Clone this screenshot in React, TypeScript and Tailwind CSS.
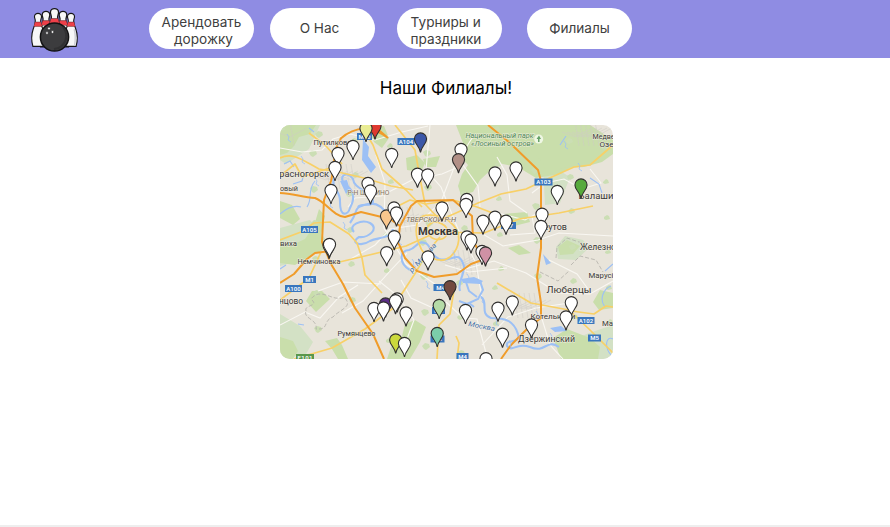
import React from "react";

type Pin = [number, number, string?];

const pins: Pin[] = [
  [375, 126, "#df3a30"], [366, 128.5, "#e9ec93"], [353, 146.5], [338, 153.5], [335, 167.5], [331, 190.5],
  [391.7, 154.5], [368, 183.5], [370.5, 191], [420.5, 139, "#3c57a8"], [461, 149.5], [458.5, 159.7, "#b18f86"],
  [417.5, 174.2], [427.7, 175], [495, 173], [516, 168], [557.3, 191.5], [581, 185, "#57aa3d"],
  [466.8, 199.5], [466, 204.5], [442, 208], [386.5, 216, "#fac78d"], [394, 208], [396.5, 213],
  [394.3, 236.7], [386.7, 252.7], [428, 257], [467, 237], [471, 240], [483, 221.2], [495, 217.2], [506, 221.2],
  [482, 251.5], [485.5, 253, "#cf91a5"], [542, 214.2], [541, 226.5], [329, 245.3], [329.5, 244.5],
  [450, 286.7, "#724a40"], [385.5, 304, "#5b2c87"], [374, 308.5], [383.5, 308], [397.2, 299], [395.5, 300.7],
  [406, 313], [439.2, 305.5, "#b5dba7"], [437.2, 333.5, "#7bcdaa"], [395.7, 340, "#cbd93c"], [404.5, 343.5],
  [465.5, 310.5], [498, 308.2], [512.3, 302], [571.3, 302.7], [566, 317], [531.5, 325], [502.5, 334.2], [486, 358.7],
];

const shields: [string, number, number, number][] = [
  ["M10", 357, 133, 15], ["A104", 397.5, 138, 17], ["A103", 534.5, 178.5, 18], ["A105", 301, 226, 17],
  ["M1", 303, 276, 13], ["A100", 285, 285, 17], ["M4", 433.5, 284, 14], ["A102", 577.5, 317, 17],
  ["M5", 588, 334.5, 13], ["M4", 456.5, 353, 12], ["M2", 432, 307, 13], ["M2", 430.5, 335.5, 14], ["M7", 501, 222, 15],
];

const labels: { t: string; x: number; y: number; w: number; s: number; c?: string; b?: boolean; i?: boolean; r?: number }[] = [
  { t: "Путилково", x: 313.5, y: 144.5, w: 38, s: 7.5 },
  { t: "Красногорск", x: 273.5, y: 176.5, w: 55.5, s: 9.4 },
  { t: "овый", x: 280, y: 191, w: 18, s: 7.5 },
  { t: "Р-Н ЩУКИНО", x: 347.5, y: 195, w: 42, s: 6.8, c: "#83735f" },
  { t: "ТВЕРСКОЙ Р-Н", x: 406, y: 221.5, w: 50, s: 7, c: "#766957", i: true },
  { t: "Москва", x: 418, y: 235, w: 40, s: 11, b: true },
  { t: "Немчиновка", x: 297.5, y: 264, w: 43, s: 7.5 },
  { t: "виха", x: 280, y: 246, w: 17, s: 7.7 },
  { t: "нцово", x: 279, y: 303.5, w: 24, s: 9 },
  { t: "Румянцево", x: 337.5, y: 336, w: 38, s: 7.5 },
  { t: "Национальный парк", x: 465.5, y: 138, w: 68, s: 7.3, c: "#4d8752", i: true },
  { t: "«Лосиный остров»", x: 471, y: 145.5, w: 63, s: 7.3, c: "#4d8752", i: true },
  { t: "Медве", x: 592.5, y: 138.5, w: 22, s: 7.4 },
  { t: "Озе", x: 599.5, y: 146.5, w: 14, s: 7.4 },
  { t: "Балаши", x: 578.5, y: 199, w: 35, s: 9.4 },
  { t: "Реутов", x: 538, y: 229.5, w: 29, s: 8.4 },
  { t: "Железно", x: 580, y: 249.5, w: 36, s: 8.6 },
  { t: "Марусі", x: 588.5, y: 278, w: 25, s: 7.6 },
  { t: "Люберцы", x: 546.5, y: 292.5, w: 45, s: 9.8 },
  { t: "Котельники", x: 530.5, y: 319, w: 45, s: 7.6 },
  { t: "Дзержинский", x: 518, y: 342, w: 57, s: 8.6 },
  { t: "Ма", x: 602, y: 325.5, w: 11, s: 7.6 },
  { t: "Москва", x: 468, y: 326, w: 27, s: 7, c: "#416da6", i: true, r: 11 },
  { t: "р. Москва", x: 412, y: 273, w: 37, s: 7, c: "#416da6", i: true, r: -48 },
];

const forests = [
  "M280 125H316L310 134L299 137L294 146L287 153L280 155Z",
  "M280 240L290 246L305 239L314 226L319 209L325 216L321 235L325 249L308 257L295 265L280 263Z",
  "M456 125H534L543 151L558 166L575 165L560 174L536 178L518 167L498 163L480 180L473 192L461 195L458 186L462 174L468 165L461 157L463 143Z",
  "M476 125H590L613 140V154L602 162L584 167L563 168L546 175L543 163L526 144L511 137L489 138Z",
  "M406 158L417 155L425 163L421 172L407 170Z",
  "M423 159L440 156L436 167L426 167Z",
  "M503 214L527 212L530 222L514 226L503 219Z",
  "M405 324L415 320L426 327L420 342L410 359H387L391 347L402 336Z",
  "M558 247L567 240L580 246L573 254L560 255Z",
  "M553 338L567 329L590 338L600 347L598 359H561Z",
  "M280 337L293 341L298 351L293 359H280Z",
  "M325 341L337 338L342 345L348 359H338L332 349Z",
  "M306 301L312 291L322 291L330 299L316 312Z",
  "M280 201L292 205L300 219L293 225L280 218Z",
  "M368 128L384 126L389 138L382 148L374 142Z",
  "M508 248L519 245L531 253L519 255Z",
  "M593 302L600 290L613 293V308L599 310Z",
];

const waters = [
  "M335 175C329 190 341 189 340 202C340 218 348 215 350 208C356 197 353 189 345 185C337 176 347 170 353 179C354 190 371 190 373 201C373 208 361 202 358 207",
  "M350 223C360 210 351 208 368 204C377 202 383 207 388 216",
  "M354 232C347 225 362 219 370 223C380 229 368 238 359 237C349 243 361 247 370 241C378 237 391 239 393 229",
  "M410 270C399 264 399 250 409 250C417 248 417 240 425 243C431 244 429 255 439 259C453 263 458 248 464 266C464 277 457 283 460 291",
  "M481 297C489 302 479 314 491 318C506 318 514 321 518 334C521 345 505 338 507 346C513 353 515 342 530 347C546 354 546 338 559 347",
];

const streams = [
  "M280 214C287 208 294 205 301 207M307 207C313 198 307 190 315 181M280 269L286 265M605 307C599 300 603 289 611 286M613 339C606 335 604 347 611 355",
  "M284 164L290 161L294 167M314 132L309 128M293 184L302 181L304 173M560 145L566 136M590 178L599 184L602 193M298 324L304 325M605 271L613 264",
];

const minorRoads = [
  "M280 158C293 152 302 160 319 169L338 172L364 178L391 186L413 190",
  "M309 133L326 146L342 164M280 176L295 164L302 177L333 167M280 300L309 278L321 252",
  "M280 240L301 232L314 223L330 222L349 234L357 243L362 258L365 275L382 293",
  "M331 264L365 256L406 246L437 232L484 233L519 219L559 213L593 206",
  "M294 359L332 348L365 329L392 309L416 272L428 251L440 237",
  "M395 125L415 150L420 178L425 204L440 220L456 213L478 203L501 194L526 189L543 181L574 167L590 165L613 145",
  "M361 125L373 145L382 169L406 190L422 207",
  "M394 208L410 200L426 204L453 200L477 207L503 217",
  "M454 290L450 314L439 325L437 359M497 283L531 303L569 310L590 330L613 353",
  "M418 220C423 212 444 215 450 222C464 233 459 249 450 257C440 265 423 256 420 246C415 236 416 226 418 220",
  "M430 224C436 219 449 225 447 233C446 241 434 241 430 236C426 232 426 227 430 224",
  "M571 311L594 314L606 306L613 307M457 359L459 343L456 336",
];

const whiteRoads = [
  "M280 148L302 152L322 150L333 139L350 134L375 140L402 132L428 126",
  "M348 207L355 198L381 196L412 180L442 174L463 165L478 186L480 207",
  "M349 260L375 245L390 229L417 225L441 202L455 165L474 135",
  "M465 269L494 261L526 273L558 293L590 294L613 281",
  "M481 233L503 246L538 240L559 233L613 236M532 193L545 183L564 179L582 189L601 183L590 169",
  "M445 265L469 272L507 268M446 302L463 318L477 319L486 353M542 319L550 345L563 359",
  "M401 280L411 298L433 308M379 281L399 297L414 320L404 347M342 313L363 301L391 270L407 253",
  "M280 325L305 312L320 318L339 297L358 285M318 291L343 282L381 284",
  "M430 125L426 170L441 187L458 229L476 263L482 298M376 155L385 183L384 228L406 264L439 287",
  "M497 157L507 175L510 201L527 213M494 212L525 220L538 213M510 235L535 233L532 216",
  "M549 260L577 274L588 289M482 345L508 317L536 308L576 302",
];

const logoPins: [number, number, number][] = [
  [46, 11.3, 0.95], [63, 11.3, 0.95], [38, 13.4, 0.88], [71, 13.4, 0.88], [54.5, 8.5, 1.02],
];

function BowlingLogo() {
  return (
    <svg className="ml-7 h-[58px] w-[54px] shrink-0" viewBox="28 0 54 58" aria-label="Боулинг">
      {logoPins.map(([x, y, s], i) => (
        <g key={i} transform={`translate(${x} ${y}) scale(${s})`}>
          <path d="M-3.2 9.5C-2.6 7-4 5.8-4 3.8C-4-1.2 4-1.2 4 3.8C4 5.8 2.6 7 3.2 9.5C3.5 13 4.3 15 5.5 18C8 25 7.3 32 5.8 37.4H-5.8C-7.3 32-8 25-5.5 18C-4.3 15-3.5 13-3.2 9.5Z" fill="#f7f7f7" stroke="#171719" strokeWidth="1.3" />
          <path d="M3.7 18C5.5 25 5 31 4 36.5" fill="none" stroke="#cdcdd2" strokeWidth="1.6" />
          <path d="M-3.4 9.8H3.4L4.7 14.8H-4.7Z" fill="#ef4049" />
          <path d="M-3.4 9.8H3.4M-4.7 14.8H4.7" stroke="#431e22" strokeWidth=".5" />
        </g>
      ))}
      <circle cx="54.5" cy="37" r="14.1" fill="#3c3c3e" stroke="#121213" strokeWidth="1.5" />
      <path d="M63 27C70 36 65 48 54 49" fill="none" stroke="#303032" strokeWidth="2" />
      {[[49, 28.5], [47, 33], [52.5, 32]].map(([x, y], i) => (
        <circle key={i} cx={x} cy={y} r="1.4" fill="#f2f2f2" stroke="#171719" strokeWidth=".6" />
      ))}
    </svg>
  );
}

function BranchMap() {
  return (
    <svg className="mx-auto block h-[234px] w-[333px] overflow-hidden rounded-[10px]" viewBox="280 125 333 234" fontFamily='Roboto, "Noto Sans", sans-serif'>
      <rect x="280" y="125" width="333" height="234" fill="#e8e4da" />
      <g fill="#d3e1c5">
        <path d="M280 125H320L309 149L286 164L280 160ZM280 228L310 220L327 241L307 259L280 266ZM280 314L300 326L313 342L306 354L280 359Z" />
        <path d="M543 166L555 168L570 177L560 203L545 205ZM568 342L589 333L613 325V359H561ZM556 247L565 236L583 240L589 248L576 260L558 259Z" />
      </g>
      <g fill="#c9deab">{forests.map((d, i) => <path key={i} d={d} />)}</g>
      <g fill="#cbdeb4">
        {Array.from({ length: 60 }, (_, i) => {
          const x = 282 + ((i * 73) % 329);
          const y = 128 + ((i * 47) % 229);
          return <path key={i} d={`M${x - 3} ${y}l3 -${2 + (i % 2)}l${2 + (i % 3)} 1l1 3l-4 ${1 + (i % 3)}l-2 -1Z`} />;
        })}
      </g>
      <g fill="none" stroke="#cfccc5" strokeWidth=".7" opacity=".7">
        {Array.from({ length: 27 }, (_, i) => {
          const x = 290 + ((i * 61) % 310);
          const y = 132 + ((i * 43) % 215);
          return <path key={i} d={`M${x - 13} ${y}L${x} ${y + 5}L${x + 17} ${y - 4}M${x} ${y - 11}L${x + 4} ${y + 14}`} />;
        })}
      </g>
      <g fill="none" stroke="#f9f7f2" strokeWidth="1.1">{whiteRoads.map((d, i) => <path key={i} d={d} />)}</g>
      <path d="M306 311C304 304 320 307 311 299C321 286 333 303 344 297C354 307 340 309 333 317C322 321 330 330 316 329C318 319 303 319 306 311M556 258L557 247L567 238L582 243L589 250M571 265L580 256L596 260L603 272M540 272L558 281L569 271" fill="none" stroke="#b3b0a9" strokeWidth=".8" strokeDasharray="4 2" />
      <g fill="none" stroke="#9cc0f5" strokeWidth="2.1">{waters.map((d, i) => <path key={i} d={d} />)}</g>
      <g fill="none" stroke="#9cc0f5" strokeWidth="1.1">{streams.map((d, i) => <path key={i} d={d} />)}</g>
      <path d="M363 139L369 147L368 156L376 167L371 173L362 160ZM461 279L474 277L483 281L480 284L463 283ZM340 181L347 180L350 190L346 194ZM550 328L561 326L567 331L555 332ZM543 254L551 263L546 265Z" fill="#9cc0f5" />
      <path d="M480 281L483 290L478 299L467 304L459 301M466 282L469 291L477 297M469 303L474 307" fill="none" stroke="#9cc0f5" strokeWidth="2" />
      <g fill="none" stroke="#f8d067" strokeWidth="1.7" strokeLinejoin="round">{minorRoads.map((d, i) => <path key={i} d={d} />)}</g>
      <g fill="none" stroke="#f09c2a" strokeWidth="2" strokeLinejoin="round">
        <path d="M340 139C355 126 371 125 388 138M373 125L388 138M341 139C333 148 335 165 331 181L324 200L322 242L331 264L343 284L355 308L373 334L384 359" />
        <path d="M280 193C293 193 303 198 315 198C326 202 333 216 345 217L361 212L390 219L400 226" />
        <path d="M280 283L294 274L307 259L315 253L330 251" />
        <path d="M400 226L411 206L417 201L453 200L472 216L473 240L479 252L485 259L471 264L457 274L434 277L417 271L405 258L398 242Z" />
        <path d="M488 125L510 143L538 170L541 181L541 248L537 277L541 303L541 318L530 326L511 345L501 359" />
      </g>
      <g fill="none" stroke="#9cc0f5" strokeWidth=".8">
        {Array.from({ length: 19 }, (_, i) => {
          const x = 287 + ((i * 83) % 318);
          const y = 134 + ((i * 59) % 214);
          return <path key={i} d={`M${x} ${y}l2 3l-1 3l3 2`} />;
        })}
      </g>
      <circle cx="538.7" cy="139" r="4.5" fill="#eff7e4" /><path d="M539 135.5L541 139H539.5V142H538V139H536.5Z" fill="#66a269" />
      {shields.map(([t, x, y, w], i) => (
        <g key={i}>
          <rect x={x} y={y} width={w} height="7" fill="#3976bd" />
          <text x={x + w / 2} y={y + 5.7} textAnchor="middle" fill="white" fontSize="6" fontWeight="600">{t}</text>
        </g>
      ))}
      <rect x="296" y="354" width="18" height="7" fill="#5a984c" /><text x="297.5" y="359.5" textLength="15" fill="white" fontSize="6" fontWeight="600">E101</text>
      {labels.map((v, i) => (
        <text key={i} x={v.x} y={v.y} textLength={v.w} lengthAdjust="spacingAndGlyphs" fontSize={v.s} fontWeight={v.b ? 700 : 400} fontStyle={v.i ? "italic" : "normal"} fill={v.c || "#383735"} stroke="#f5f1e9" strokeWidth="1" strokeOpacity=".8" paintOrder="stroke" transform={v.r ? `rotate(${v.r} ${v.x} ${v.y})` : undefined}>{v.t}</text>
      ))}
      {pins.map(([x, y, fill = "#fff"], i) => (
        <path key={i} transform={`translate(${x} ${y})`} d="M0 13.5C-1 7-6.1 4.8-6.1 0A6.1 6.1 0 1 1 6.1 0C6.1 4.8 1 7 0 13.5Z" fill={fill} stroke="#302f2e" strokeWidth="1.1" />
      ))}
    </svg>
  );
}

const pill = "flex h-[41px] w-[105px] shrink-0 items-center justify-center rounded-full bg-white text-center text-[13.6px] leading-[17px] text-[#404040]";

export default function App() {
  return (
    <div className="flex h-[527px] w-[890px] flex-col overflow-hidden bg-white font-['Inter','Noto_Sans',sans-serif]">
      <header className="flex h-[57.5px] shrink-0 items-start bg-[#8f8ce3]">
        <BowlingLogo />
        <nav className="ml-[67px] flex pt-2">
          <button className={pill}><span className="pt-1">Арендовать<br /><span className="pl-1">дорожку</span></span></button>
          <button className={`ml-4 ${pill}`}><span className="pr-1.5">О Нас</span></button>
          <button className={`ml-[21.5px] ${pill}`}><span className="pr-1.5 pt-1 text-left">Турниры и<br />праздники</span></button>
          <button className={`ml-[25.5px] ${pill}`}>Филиалы</button>
        </nav>
      </header>
      <main className="flex grow flex-col pt-[18.5px]">
        <h1 className="ml-[2px] text-center text-[17.1px] leading-6 text-black">Наши Филиалы!</h1>
        <div className="mt-[25px] pl-[3px]"><BranchMap /></div>
      </main>
      <footer className="h-[2px] shrink-0 bg-[#eeeeee]" />
    </div>
  );
}
